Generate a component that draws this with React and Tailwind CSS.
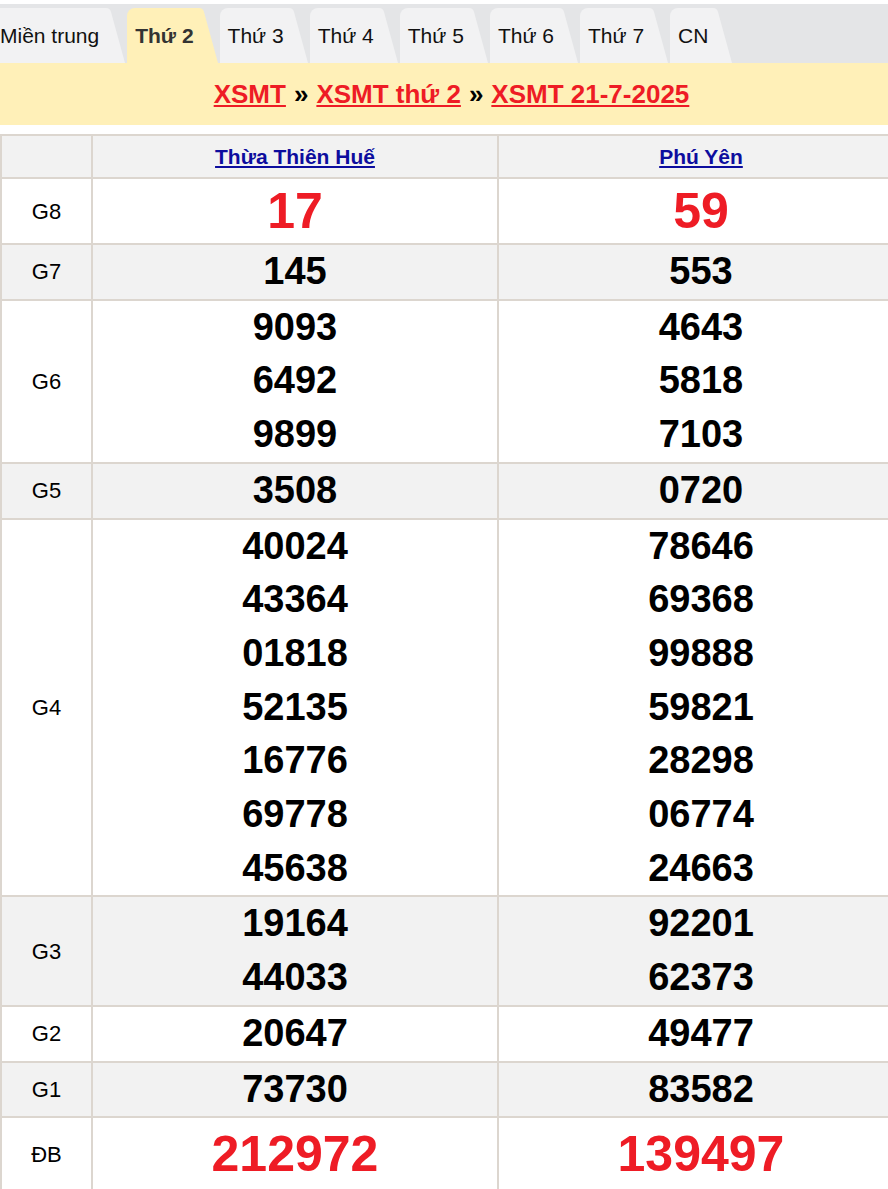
import React from 'react';

const tabs = ['Miền trung', 'Thứ 2', 'Thứ 3', 'Thứ 4', 'Thứ 5', 'Thứ 6', 'Thứ 7', 'CN'];

const rows = [
  { g: 'G8', a: ['17'], b: ['59'], big: true },
  { g: 'G7', a: ['145'], b: ['553'] },
  { g: 'G6', a: ['9093', '6492', '9899'], b: ['4643', '5818', '7103'] },
  { g: 'G5', a: ['3508'], b: ['0720'] },
  {
    g: 'G4',
    a: ['40024', '43364', '01818', '52135', '16776', '69778', '45638'],
    b: ['78646', '69368', '99888', '59821', '28298', '06774', '24663'],
  },
  { g: 'G3', a: ['19164', '44033'], b: ['92201', '62373'] },
  { g: 'G2', a: ['20647'], b: ['49477'] },
  { g: 'G1', a: ['73730'], b: ['83582'] },
  { g: 'ĐB', a: ['212972'], b: ['139497'], big: true, last: true },
];

function Tab({ label, active, first }) {
  const bg = active ? '#fff0b8' : '#f2f2f3';
  return (
    <div className={`flex items-stretch h-[55px] ${first ? '-ml-[8px]' : ''}`}>
      <div
        className={`flex items-center pl-[8px] ${first ? 'pr-[4px]' : 'pr-[2px]'} rounded-tl-[8px] ${active ? 'font-bold text-[#333]' : 'text-[#111]'}`}
        style={{ background: bg }}
      >
        {label}
      </div>
      <svg width="22" height="55" viewBox="0 0 22 55" className="block">
        <path d="M0 0 H3 Q7 0 8 4 L22 55 H0 Z" fill={bg} />
      </svg>
    </div>
  );
}

function Cell({ nums, big, last, odd }) {
  return (
    <td className={`border-2 border-[#dcd6cf] text-center font-bold p-0 ${odd ? 'bg-[#f2f2f2]' : 'bg-white'}`}>
      {nums.map((n) => (
        <div
          key={n}
          className={
            big
              ? `text-[50px] text-[#ee1c25] ${last ? 'leading-[72px]' : 'leading-[64px]'}`
              : 'text-[38px] leading-[53.7px] text-black'
          }
        >
          {n}
        </div>
      ))}
    </td>
  );
}

export default function App() {
  return (
    <div className="w-[888px] overflow-hidden bg-white font-['Liberation_Sans',Arial,sans-serif]">
      <div className="w-[903px]">
        <div className="mt-[4px] bg-[#e4e5e7] pt-[4px] flex gap-[2px] text-[21px]">
          {tabs.map((t, i) => (
            <Tab key={t} label={t} active={i === 1} first={i === 0} />
          ))}
        </div>
        <div className="bg-[#fff0b8] h-[62px] flex items-center justify-center text-[26px] font-bold">
          <a className="text-[#ee1c25] underline">XSMT</a>
          <span className="mx-[8px] text-black">»</span>
          <a className="text-[#ee1c25] underline">XSMT thứ 2</a>
          <span className="mx-[8px] text-black">»</span>
          <a className="text-[#ee1c25] underline">XSMT 21-7-2025</a>
        </div>
        <table className="mt-[9px] w-[903px] border-collapse table-fixed">
          <colgroup>
            <col className="w-[91px]" />
            <col className="w-[406px]" />
            <col className="w-[406px]" />
          </colgroup>
          <thead>
            <tr className="bg-[#f2f2f2]">
              <th className="border-2 border-[#dcd6cf] h-[43px]"></th>
              <th className="border-2 border-[#dcd6cf] text-[21px] font-bold">
                <a className="text-[#0d0d9e] underline">Thừa Thiên Huế</a>
              </th>
              <th className="border-2 border-[#dcd6cf] text-[21px] font-bold">
                <a className="text-[#0d0d9e] underline">Phú Yên</a>
              </th>
            </tr>
          </thead>
          <tbody>
            {rows.map((r, i) => {
              const odd = i % 2 === 1;
              return (
                <tr key={r.g}>
                  <td className={`border-2 border-[#dcd6cf] text-center text-[22px] text-black ${odd ? 'bg-[#f2f2f2]' : 'bg-white'}`}>
                    {r.g}
                  </td>
                  <Cell nums={r.a} big={r.big} last={r.last} odd={odd} />
                  <Cell nums={r.b} big={r.big} last={r.last} odd={odd} />
                </tr>
              );
            })}
          </tbody>
        </table>
      </div>
    </div>
  );
}
